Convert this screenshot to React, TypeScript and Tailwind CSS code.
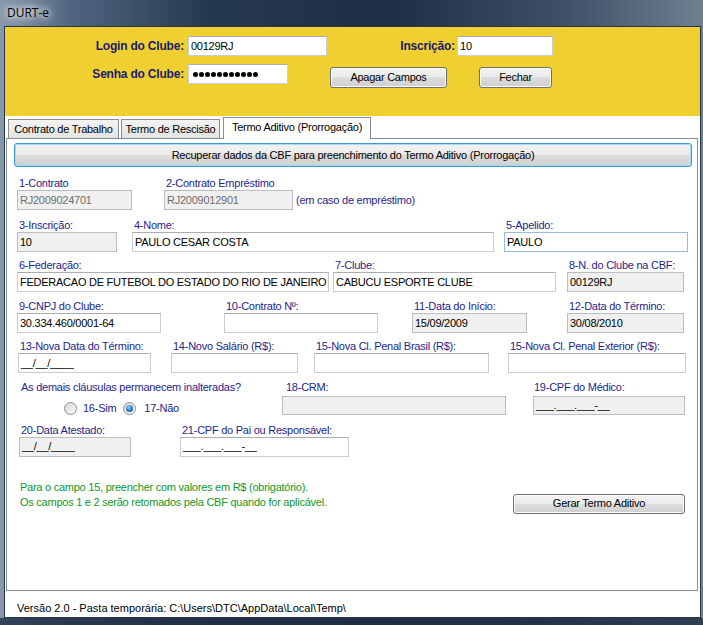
import React from 'react';

type BoxKind = 'edit' | 'disabled' | 'readonly' | 'focus';

const Box: React.FC<{ value?: string; kind?: BoxKind; className?: string }> = ({
  value = '',
  kind = 'edit',
  className = '',
}) => {
  const look =
    kind === 'disabled'
      ? 'bg-[#f0f0f0] text-[#6d6d6d] border-[#b9bcc1]'
      : kind === 'readonly'
      ? 'bg-[#f0f0f0] text-black border-[#b9bcc1]'
      : kind === 'focus'
      ? 'bg-white text-black border-[#98bbe0]'
      : 'bg-white text-black border-[#c9ccd1] border-t-[#abadb3]';
  return (
    <div
      className={`border pl-[2px] flex items-center whitespace-nowrap overflow-hidden text-[11px] leading-none ${look} ${className}`}
    >
      {value}
    </div>
  );
};

const Field: React.FC<{ label: string; value?: string; kind?: BoxKind; className: string }> = ({
  label,
  value,
  kind,
  className,
}) => (
  <div className={className}>
    <div className="h-[14px] leading-[14px] pl-[2px] text-[#1e1e8c] whitespace-nowrap">{label}</div>
    <Box value={value} kind={kind} className="h-[20px]" />
  </div>
);

const WinButton: React.FC<{ children: React.ReactNode; className: string }> = ({ children, className }) => (
  <div
    className={`flex items-center justify-center rounded-[3px] border border-[#707070] text-[11px] text-black shadow-[inset_0_0_0_1px_#fbfbfb] bg-[linear-gradient(#f2f2f2_0%,#ebebeb_50%,#dddddd_50%,#cfcfcf_100%)] ${className}`}
  >
    {children}
  </div>
);

const Radio: React.FC<{ checked?: boolean }> = ({ checked }) => (
  <span className="w-[13px] h-[13px] rounded-full border border-[#8c8f94] bg-[linear-gradient(135deg,#d4d6d9,#fbfbfb)] flex items-center justify-center">
    {checked && (
      <span className="w-[7px] h-[7px] rounded-full bg-[radial-gradient(circle_at_40%_35%,#8ad8ff,#2a79b8_55%,#0d3b66)]" />
    )}
  </span>
);

export default function App() {
  return (
    <div className="w-[703px] h-[625px] overflow-hidden flex flex-col font-['Liberation_Sans',Arial,sans-serif] bg-[linear-gradient(90deg,#8798aa_0%,#506680_10%,#24384f_30%,#1c2f47_55%,#3e5067_80%,#6f7f90_100%)]">
      {/* barra de título */}
      <div className="h-[26px] flex items-center pl-[7px] shrink-0">
        <span className="font-['Open_Sans','Noto_Sans',sans-serif] text-[12px] text-black [text-shadow:0_0_6px_#fff,0_0_10px_#fff,0_0_16px_#e8eef4]">
          DURT-e
        </span>
      </div>

      {/* área cliente */}
      <div className="ml-[4px] w-[697px] h-[592px] shrink-0 border border-[#26374c] bg-white flex flex-col">
        {/* cabeçalho amarelo */}
        <div className="h-[89px] bg-[#f0d030] pt-[9px] shrink-0">
          <div className="flex items-center h-[20px]">
            <div className="w-[179px] text-right font-bold text-[12px] tracking-[-0.2px] text-[#1b1b6e]">Login do Clube:</div>
            <Box value="00129RJ" className="ml-[4px] w-[139px] h-[20px] tracking-[-0.25px]" />
            <div className="w-[128px] text-right font-bold text-[12px] tracking-[-0.2px] text-[#1b1b6e]">Inscrição:</div>
            <Box value="10" className="ml-[2px] w-[96px] h-[20px]" />
          </div>
          <div className="flex items-start mt-[8px]">
            <div className="w-[179px] h-[20px] flex items-center justify-end font-bold text-[12px] tracking-[-0.2px] text-[#1b1b6e]">
              Senha do Clube:
            </div>
            <div className="ml-[4px] w-[100px] h-[20px] border border-[#c9ccd1] border-t-[#abadb3] bg-white flex items-center pl-[4px]">
              {Array.from({ length: 11 }).map((_, i) => (
                <span key={i} className="w-[5px] h-[5px] rounded-full bg-black mr-[1px]" />
              ))}
            </div>
            <WinButton className="ml-[42px] mt-[3px] w-[117px] h-[21px] tracking-[-0.25px]">Apagar Campos</WinButton>
            <WinButton className="ml-[32px] mt-[3px] w-[73px] h-[21px] tracking-[-0.25px]">Fechar</WinButton>
          </div>
        </div>

        {/* abas */}
        <div className="h-[22px] flex items-end pl-[3px] text-[11px] tracking-[-0.25px] shrink-0">
          <div className="w-[111px] h-[19px] border border-b-0 border-[#898c95] bg-[linear-gradient(#f3f3f3,#e3e3e3)] flex items-center justify-center">
            Contrato de Trabalho
          </div>
          <div className="ml-[2px] w-[99px] h-[19px] border border-b-0 border-[#898c95] bg-[linear-gradient(#f3f3f3,#e3e3e3)] flex items-center justify-center">
            Termo de Rescisão
          </div>
          <div className="relative z-10 ml-[3px] mb-[-1px] w-[148px] h-[22px] border border-b-0 border-[#898c95] bg-white flex items-center justify-center pb-[3px]">
            Termo Aditivo (Prorrogação)
          </div>
        </div>

        {/* painel */}
        <div className="ml-[1px] w-[692px] h-[453px] border border-[#898c95] bg-white text-[11px] tracking-[-0.25px] shrink-0 flex flex-col">
          <div className="ml-[7px] mt-[4px] w-[678px] h-[24px] rounded-[3px] border border-[#3c9ad9] shadow-[inset_0_0_0_1px_#a6dcf7] bg-[linear-gradient(#f2f2f2_0%,#ebebeb_50%,#dddddd_50%,#cfcfcf_100%)] flex items-center justify-center">
            Recuperar dados da CBF para preenchimento do Termo Aditivo (Prorrogação)
          </div>

          <div className="flex items-end mt-[9px]">
            <Field className="ml-[10px] w-[115px]" label="1-Contrato" value="RJ2009024701" kind="disabled" />
            <Field className="ml-[32px] w-[129px]" label="2-Contrato Empréstimo" value="RJ2009012901" kind="disabled" />
            <div className="ml-[3px] h-[20px] leading-[20px] text-[#1e1e8c]">(em caso de empréstimo)</div>
          </div>

          <div className="flex mt-[8px]">
            <Field className="ml-[10px] w-[100px]" label="3-Inscrição:" value="10" kind="readonly" />
            <Field className="ml-[15px] w-[362px]" label="4-Nome:" value="PAULO CESAR COSTA" />
            <Field className="ml-[10px] w-[184px]" label="5-Apelido:" value="PAULO" kind="focus" />
          </div>

          <div className="flex mt-[6px]">
            <Field className="ml-[10px] w-[312px]" label="6-Federação:" value="FEDERACAO DE FUTEBOL DO ESTADO DO RIO DE JANEIRO" />
            <Field className="ml-[4px] w-[223px]" label="7-Clube:" value="CABUCU ESPORTE CLUBE" />
            <Field className="ml-[11px] w-[117px]" label="8-N. do Clube na CBF:" value="00129RJ" kind="readonly" />
          </div>

          <div className="flex mt-[7px]">
            <Field className="ml-[10px] w-[144px]" label="9-CNPJ do Clube:" value="30.334.460/0001-64" />
            <Field className="ml-[63px] w-[154px]" label="10-Contrato Nº:" />
            <Field className="ml-[34px] w-[115px]" label="11-Data do Início:" value="15/09/2009" kind="readonly" />
            <Field className="ml-[40px] w-[117px]" label="12-Data do Término:" value="30/08/2010" kind="readonly" />
          </div>

          <div className="flex mt-[6px]">
            <Field className="ml-[11px] w-[133px]" label="13-Nova Data do Término:" value="__/__/____" />
            <Field className="ml-[20px] w-[127px]" label="14-Novo Salário (R$):" />
            <Field className="ml-[16px] w-[175px]" label="15-Nova Cl. Penal Brasil (R$):" />
            <Field className="ml-[19px] w-[178px]" label="15-Nova Cl. Penal Exterior (R$):" />
          </div>

          <div className="flex mt-[7px]">
            <div className="ml-[10px] w-[265px]">
              <div className="h-[14px] leading-[14px] pl-[4px] text-[#1e1e8c]">As demais cláusulas permanecem inalteradas?</div>
              <div className="flex items-center mt-[6px] ml-[47px] text-[#1e1e8c]">
                <Radio />
                <span className="ml-[6px]">16-Sim</span>
                <span className="ml-[7px]">
                  <Radio checked />
                </span>
                <span className="ml-[8px]">17-Não</span>
              </div>
            </div>
            <div className="w-[224px]">
              <div className="h-[14px] leading-[14px] pl-[4px] text-[#1e1e8c]">18-CRM:</div>
              <Box kind="disabled" className="mt-[2px] h-[19px]" />
            </div>
            <div className="ml-[27px] w-[152px]">
              <div className="h-[14px] leading-[14px] pl-[1px] text-[#1e1e8c]">19-CPF do Médico:</div>
              <Box kind="readonly" value="___.___.___-__" className="mt-[2px] h-[19px]" />
            </div>
          </div>

          <div className="flex mt-[6px]">
            <Field className="ml-[12px] w-[112px]" label="20-Data Atestado:" value="__/__/____" kind="readonly" />
            <Field className="ml-[49px] w-[169px]" label="21-CPF do Pai ou Responsável:" value="___.___.___-__" />
          </div>

          <div className="flex items-start mt-[23px]">
            <div className="ml-[13px] leading-[15px] text-[#0f982a]">
              <div>Para o campo 15, preencher com valores em R$ (obrigatório).</div>
              <div>Os campos 1 e 2 serão retomados pela CBF quando for aplicável.</div>
            </div>
            <WinButton className="ml-auto mr-[12px] mt-[14px] w-[172px] h-[20px]">Gerar Termo Aditivo</WinButton>
          </div>
        </div>

        {/* barra de status */}
        <div className="h-[26px] pt-[10px] pl-[12px] text-[11px] leading-[14px] text-black">
          Versão 2.0 - Pasta temporária: C:\Users\DTC\AppData\Local\Temp\
        </div>
      </div>

      <div className="flex-1 bg-[#1e2e44]/80" />
    </div>
  );
}
